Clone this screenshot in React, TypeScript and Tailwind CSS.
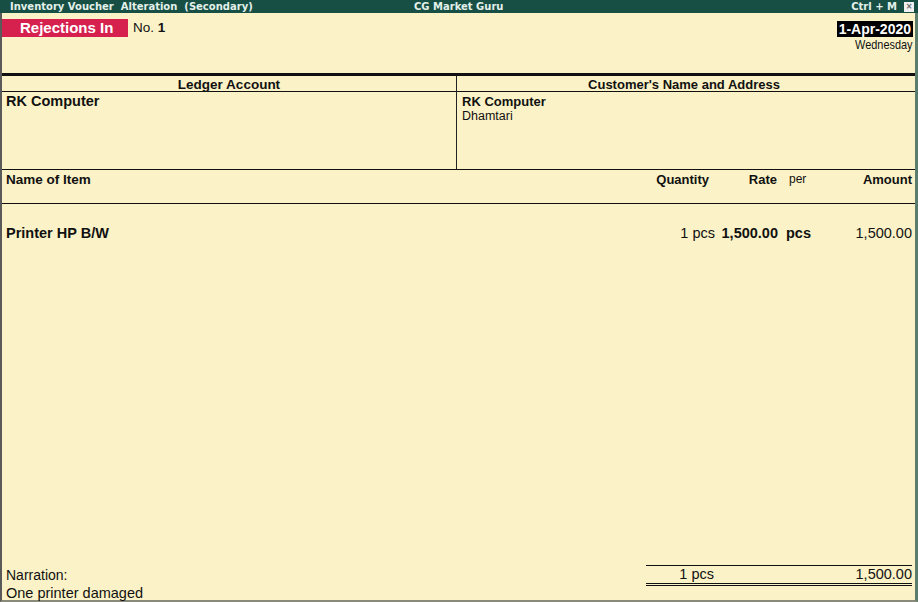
import React from "react";

export default function App() {
  return (
    <div className="w-[918px] h-[602px] flex flex-col bg-[#fbf3c7] text-[13px] leading-[15px] text-[#111] font-['Liberation_Sans',Arial,sans-serif] overflow-hidden">
      {/* Title bar */}
      <div className="h-[13px] bg-[#174f45] flex items-center text-[#e3f1ea] font-['DejaVu_Sans',Verdana,sans-serif] font-bold text-[10px] leading-[13px] whitespace-pre">
        <div className="w-[414px] pl-[10px]">Inventory Voucher  Alteration  (Secondary)</div>
        <div className="flex-1">CG Market Guru</div>
        <div className="pr-[4px] flex items-center gap-[7px]">
          <span>Ctrl + M</span>
          <span className="w-[10px] h-[10px] bg-[#f1f1f1] flex items-center justify-center text-[#666] text-[8px] leading-[10px]">×</span>
        </div>
      </div>

      {/* Body */}
      <div className="flex-1 flex flex-col border-l-2 border-l-[#5a5a5a] border-r-[3px] border-r-[#5c7c6c] border-b-2 border-b-[#8a8a7a]">
        {/* Voucher head */}
        <div className="h-[60px] flex justify-between">
          <div className="flex items-start pt-[6px]">
            <div className="w-[126px] h-[18px] bg-[#d6214f] text-white font-bold text-[15px] leading-[18px] pl-[18px]">
              Rejections In
            </div>
            <div className="pl-[5px] leading-[18px] text-[13.5px]">
              No. <span className="font-bold">1</span>
            </div>
          </div>
          <div className="flex flex-col items-end pt-[8px] pr-[2px]">
            <div className="bg-black text-white font-bold text-[14px] leading-[16px] px-[2px]">1-Apr-2020</div>
            <div className="text-[13px] leading-[15px] pr-[1px] scale-x-[0.84] origin-right">
              Wednesday
            </div>
          </div>
        </div>

        {/* Party section */}
        <div className="border-t-[3px] border-t-[#111] grid grid-cols-[455px_1fr] h-[97px] border-b border-b-[#111]">
          <div className="border-r border-r-[#222] flex flex-col">
            <div className="h-[16px] border-b border-b-[#111] text-center font-bold leading-[16px] pt-[1px] text-[13.5px]">Ledger Account</div>
            <div className="pl-[4px] pt-[1px] font-bold text-[14.5px] leading-[16px]">RK Computer</div>
          </div>
          <div className="flex flex-col">
            <div className="h-[16px] border-b border-b-[#111] text-center font-bold leading-[16px] pt-[1px] pr-[4px]">Customer's Name and Address</div>
            <div className="pl-[5px] pt-[2px] font-bold">RK Computer</div>
            <div className="pl-[5px] text-[12.5px]">Dhamtari</div>
          </div>
        </div>

        {/* Item header */}
        <div className="h-[34px] border-b border-b-[#111] flex pl-[4px] pr-[3px] pt-[2px] font-bold">
          <div className="flex-1 text-[13.5px]">Name of Item</div>
          <div className="w-[80px] text-right pr-[6px]">Quantity</div>
          <div className="w-[63px] text-right pr-[1px]">Rate</div>
          <div className="w-[42px] pl-[11px] font-normal text-[12px]">per</div>
          <div className="w-[92px] text-right">Amount</div>
        </div>

        {/* Item row */}
        <div className="flex pl-[4px] pr-[3px] pt-[21px] text-[14.5px] leading-[17px]">
          <div className="flex-1 font-bold">Printer HP B/W</div>
          <div className="w-[80px] text-right">1 pcs</div>
          <div className="w-[63px] text-right font-bold">1,500.00</div>
          <div className="w-[42px] pl-[8px] font-bold">pcs</div>
          <div className="w-[92px] text-right">1,500.00</div>
        </div>

        <div className="flex-1" />

        {/* Footer */}
        <div className="flex pl-[4px] pr-[3px] text-[14px]">
          <div className="flex-1 pt-[2px] leading-[16px]">Narration:</div>
          <div className="w-[266px] border-t border-t-[#111] border-b-[3px] border-double border-b-[#111] flex h-[21px] leading-[16px] text-[14.5px]">
            <div className="w-[68px] text-right">1 pcs</div>
            <div className="flex-1 text-right">1,500.00</div>
          </div>
        </div>
        <div className="pl-[4px] h-[14px] leading-[14px] text-[14.5px]">One printer damaged</div>
      </div>
    </div>
  );
}
